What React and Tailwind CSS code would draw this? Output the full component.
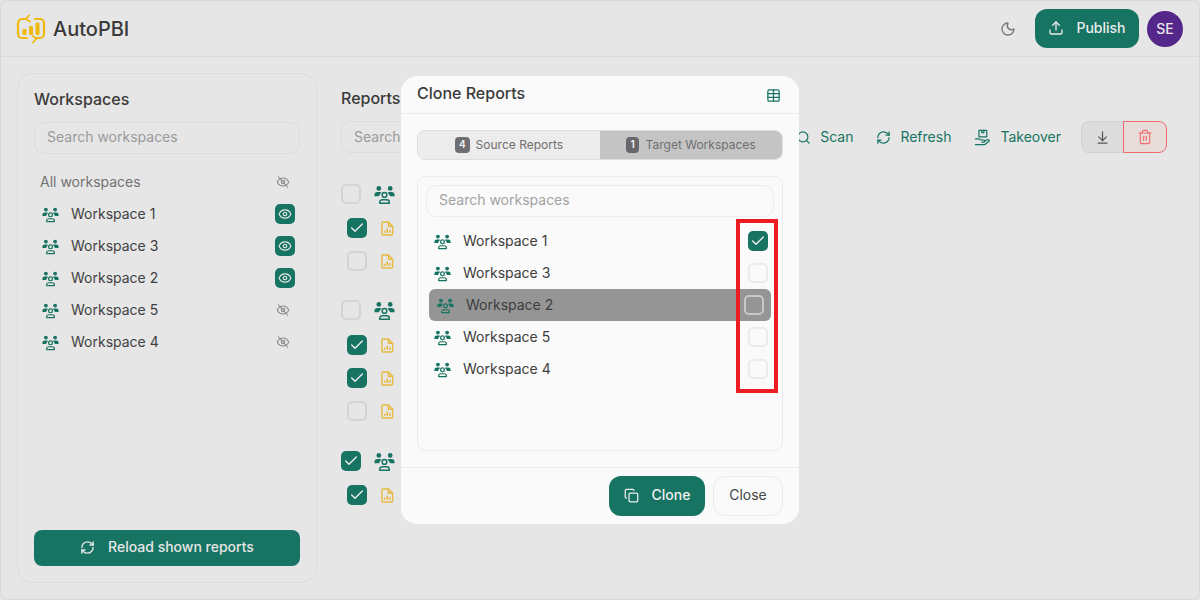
import { Check, Copy, Moon, RefreshCw, Search, Trash2, Upload, ArrowDownToLine, Eye, Table } from "lucide-react"

const WORKSPACES = ["Workspace 1", "Workspace 3", "Workspace 2", "Workspace 5", "Workspace 4"]

function TeamIcon({ className }) {
  return (
    <svg viewBox="0 0 24 24" fill="none" stroke="currentColor" strokeWidth="1.700" strokeLinecap="round" strokeLinejoin="round" className={className}>
      <circle cx="12" cy="12.500" r="2.700" />
      <path d="M6.500 22v-1a3 3 0 0 1 3 -3h5a3 3 0 0 1 3 3v1z" />
      <circle cx="5.500" cy="5" r="2.700" fill="currentColor" stroke="none" />
      <circle cx="18.500" cy="5" r="2.700" fill="currentColor" stroke="none" />
      <path d="M0.500 14v-1.500a3.500 3.500 0 0 1 3.500 -3.500h3a3 3 0 0 1 1.500 .4l-3 4.600z" fill="currentColor" stroke="none" />
      <path d="M23.500 14v-1.500a3.500 3.500 0 0 0 -3.500 -3.500h-3a3 3 0 0 0 -1.500 .4l3 4.600z" fill="currentColor" stroke="none" />
    </svg>
  )
}

function EyeHidden() {
  return (
    <svg viewBox="0 0 24 24" fill="none" stroke="currentColor" strokeWidth="1.8" strokeLinecap="round" className="h-[14px] w-[14px] text-[#8a8a8a]">
      <path d="M2 12s3.6-7 10-7 10 7 10 7-3.6 7-10 7-10-7-10-7z" />
      <circle cx="12" cy="12" r="3" />
      <path d="M4 3l16 18" />
    </svg>
  )
}

function ReportFile() {
  return (
    <svg viewBox="0 0 14 16" fill="none" className="h-[15px] w-[13px]">
      <path d="M2 1h6l4.500 4.500V14a1 1 0 0 1-1 1H2a1 1 0 0 1-1-1V2a1 1 0 0 1 1-1z" stroke="#e8b93f" strokeWidth="1.500" />
      <path d="M8 1v4.500h4.500" stroke="#e8b93f" strokeWidth="1.500" />
      <path d="M4 12.500v-2M6.700 12.500V8M9.400 12.500V9.500" stroke="#e8b93f" strokeWidth="1.700" />
    </svg>
  )
}

function Logo() {
  return (
    <svg viewBox="0 0 30 30" fill="none" className="h-[30px] w-[30px]">
      <path d="M10 5H6a4 4 0 0 0-4 4v11a4 4 0 0 0 4 4h5" stroke="#f0b90f" strokeWidth="2.200" strokeLinecap="round" />
      <path d="M20 24h4a4 4 0 0 0 4-4V9a4 4 0 0 0-4-4h-5" stroke="#f0b90f" strokeWidth="2.200" strokeLinecap="round" />
      <path d="M13 1.500l-3 3.500 4 2.500" stroke="#f0b90f" strokeWidth="1.800" strokeLinecap="round" strokeLinejoin="round" />
      <path d="M17 28.500l3.500-4-4-2.500" stroke="#f0b90f" strokeWidth="1.800" strokeLinecap="round" strokeLinejoin="round" />
      <rect x="6.500" y="15" width="4" height="6" rx="1.200" fill="#f0b90f" />
      <rect x="13" y="12" width="4" height="9" rx="1.200" fill="#f0b90f" />
      <rect x="19.500" y="8.500" width="4" height="12.500" rx="1.200" fill="#f0b90f" />
    </svg>
  )
}

function TakeoverIcon() {
  return (
    <svg viewBox="0 0 24 24" fill="none" stroke="#177463" strokeWidth="1.700" strokeLinecap="round" strokeLinejoin="round" className="h-[17px] w-[17px]">
      <path d="M7 2h11v9H7z" />
      <path d="M11 2v3h3V2" />
      <path d="M2 14h5l3 1.500h4a1.500 1.500 0 0 1 0 3h-3" />
      <path d="M14.500 17l5-2a1.500 1.500 0 0 1 2 2l-6 5H2" />
    </svg>
  )
}

function Checkbox({ checked }) {
  if (checked) {
    return (
      <span className="flex h-5 w-5 shrink-0 items-center justify-center rounded-[5px] bg-[#177463]">
        <Check size={16} strokeWidth={2} className="text-[#f0f0f0]" />
      </span>
    )
  }
  return <span className="block h-5 w-5 shrink-0 rounded-[5px] border-2 border-[#d4d4d4]" />
}

function ReportGroup({ checked, items, className, listClass }) {
  return (
    <div className={className}>
      <div className="flex h-5 items-center gap-[13px]">
        <Checkbox checked={checked} />
        <TeamIcon className="h-[21px] w-[21px] text-[#177463]" />
      </div>
      <div className={`flex flex-col gap-[13px] pl-[6px] ${listClass}`}>
        {items.map((on, i) => (
          <div key={i} className="flex h-5 items-center gap-[14px]">
            <Checkbox checked={on} />
            <ReportFile />
          </div>
        ))}
      </div>
    </div>
  )
}

function CloneModal() {
  return (
    <div className="absolute left-[401px] top-[76px] flex h-[448px] w-[398px] flex-col rounded-2xl bg-[#fafafa]">
      <div className="flex h-[38px] items-center justify-between border-b border-[#ececec] pl-4 pr-[18px]">
        <span className="pb-[3px] text-base font-medium text-[#3a3a3a]">Clone Reports</span>
        <Table size={15} strokeWidth={2} className="mt-px text-[#177463]" />
      </div>
      <div className="flex-1 px-4 pt-4">
        <div className="flex h-[30px] overflow-hidden rounded-lg border border-[#dedede] text-xs text-[#6f6f6f]">
          <div className="flex flex-1 items-center justify-center gap-[6px] bg-[#ececec]">
            <span className="flex h-4 items-center justify-center rounded bg-[#6f6f73] px-1 text-[10px] font-semibold text-[#f4f4f4]">4</span>
            Source Reports
          </div>
          <div className="flex flex-1 items-center justify-center gap-[7px] bg-[#c4c4c4]">
            <span className="flex h-4 items-center justify-center rounded bg-[#67676b] px-1 text-[10px] font-semibold text-[#f4f4f4]">1</span>
            Target Workspaces
          </div>
        </div>
        <div className="mt-4 h-[275px] rounded-lg border border-[#ececec] px-2 pt-2">
          <div className="flex h-8 items-center rounded-[10px] border border-[#ececec] pb-[2px] pl-3 text-sm text-[#a3a3a3]">Search workspaces</div>
          <div className="mt-2 flex flex-col">
            {WORKSPACES.map((name, i) => (
              <div
                key={name}
                className={i === 2
                  ? "ml-[3px] mr-[3px] flex h-8 items-center justify-between rounded-md bg-[#959595] pl-2 pr-[5px] text-sm text-[#3d3d3d]"
                  : "flex h-8 items-center justify-between pl-2 pr-[6px] text-sm text-[#3d3d3d]"}
              >
                <span className="flex items-center gap-3">
                  <TeamIcon className="h-[17px] w-[17px] text-[#177463]" />
                  {name}
                </span>
                {i === 0
                  ? <Checkbox checked />
                  : <span className={i === 2 ? "mr-[2px] block h-5 w-5 rounded-[5px] border-2 border-[#c8c8c8]" : "block h-5 w-5 rounded-[5px] border-2 border-[#ececec]"} />}
              </div>
            ))}
          </div>
        </div>
      </div>
      <div className="flex h-[57px] items-center justify-end gap-2 border-t border-[#ececec] pr-4">
        <button className="flex h-10 w-24 items-center justify-center gap-[13px] rounded-xl bg-[#177463] pb-[2px] text-sm font-medium text-[#f0f0f0]">
          <Copy size={15} />
          Clone
        </button>
        <button className="h-10 w-[70px] rounded-xl border border-[#ececec] pb-[2px] text-sm text-[#444]">Close</button>
      </div>
    </div>
  )
}

export default function App() {
  return (
    <div className="relative h-[600px] w-[1200px] overflow-hidden bg-[#e6e6e6] font-['Inter',sans-serif]">
      <div className="flex h-full flex-col rounded-lg border border-[#d8d8d8]">
        {/* Top bar */}
        <header className="flex h-[56px] items-center justify-between border-b border-[#d9d9d9] pl-[15px] pr-4">
          <div className="flex items-center gap-[7px]">
            <Logo />
            <span className="text-xl font-medium text-[#3a3a3a]">AutoPBI</span>
          </div>
          <div className="flex items-center">
            <Moon size={16} className="mr-[19px] text-[#777]" />
            <button className="flex h-[39px] w-[104px] items-center justify-center gap-3 rounded-xl bg-[#177463] pb-px text-sm font-medium text-[#ececec]">
              <Upload size={16} />
              Publish
            </button>
            <span className="ml-2 flex h-9 w-9 items-center justify-center rounded-full bg-[#56278a] text-sm font-medium text-[#e8e8e8]">SE</span>
          </div>
        </header>

        <div className="flex flex-1 gap-6 pl-4 pr-8 pt-4">
          {/* Workspaces sidebar */}
          <aside className="flex h-[510px] w-[300px] shrink-0 flex-col rounded-2xl border border-[#dcdcdc] px-4 pb-4 pt-[15px]">
            <h2 className="text-base font-medium leading-5 text-[#3a3a3a]">Workspaces</h2>
            <div className="mt-[13px] flex h-8 items-center rounded-[10px] border border-[#dcdcdc] pb-[2px] pl-3 text-sm text-[#9a9a9a]">Search workspaces</div>
            <div className="mt-3 flex h-8 items-center justify-between pl-[6px] pr-[10px] text-sm text-[#737373]">
              All workspaces
              <EyeHidden />
            </div>
            {WORKSPACES.map((name, i) => (
              <div key={name} className="flex h-8 items-center justify-between pl-2 text-sm text-[#3f3f3f]">
                <span className="flex items-center gap-3">
                  <TeamIcon className="h-[17px] w-[17px] text-[#177463]" />
                  {name}
                </span>
                {i < 3 ? (
                  <span className="mr-[5px] flex h-5 w-5 items-center justify-center rounded-[5px] bg-[#177463]">
                    <Eye size={14} className="text-[#e6e6e6]" />
                  </span>
                ) : (
                  <span className="mr-[10px]"><EyeHidden /></span>
                )}
              </div>
            ))}
            <button className="mt-auto flex h-9 items-center justify-center gap-[13px] rounded-lg bg-[#177463] pb-[2px] text-sm font-medium text-[#e6e6e6]">
              <RefreshCw size={15} strokeWidth={2.200} />
              Reload shown reports
            </button>
          </aside>

          {/* Reports column */}
          <section className="min-w-0 flex-1 pt-[15px]">
            <h2 className="text-base font-medium leading-5 text-[#3a3a3a]">Reports</h2>
            <div className="mt-[13px] flex h-8 items-center text-sm">
              <div className="flex h-8 w-[441px] items-center rounded-[10px] border border-[#dcdcdc] pl-3 text-[#9a9a9a]">Search</div>
              <div className="ml-[18px] flex items-center gap-[23px] text-[#177463]">
                <span className="flex items-center gap-[9px]"><Search size={15} />Scan</span>
                <span className="flex items-center gap-[9px]"><RefreshCw size={15} />Refresh</span>
                <span className="flex items-center gap-[9px]"><TakeoverIcon />Takeover</span>
              </div>
              <div className="ml-[20px] flex h-8 w-[86px] shrink-0">
                <span className="flex w-[42px] items-center justify-center rounded-l-lg border border-r-0 border-[#d2d2d2] bg-[#dcdcdc]">
                  <ArrowDownToLine size={15} className="text-[#555]" />
                </span>
                <span className="flex w-[44px] items-center justify-center rounded-r-lg border border-[#ef6b6b] bg-[#e8dcda]">
                  <Trash2 size={16} strokeWidth={1.700} className="text-[#ef6b6b]" />
                </span>
              </div>
            </div>
            <ReportGroup className="mt-[31px]" listClass="mt-[14px]" items={[true, false]} />
            <ReportGroup className="mt-[29px]" listClass="mt-[15px]" items={[true, true, false]} />
            <ReportGroup className="mt-[30px]" listClass="mt-[14px]" checked items={[true]} />
          </section>
        </div>
      </div>

      <CloneModal />

      {/* Red annotation around the checkboxes */}
      <div className="absolute left-[736px] top-[219px] h-[174px] w-[42px] border-4 border-[#ed1c24]" />
    </div>
  )
}
